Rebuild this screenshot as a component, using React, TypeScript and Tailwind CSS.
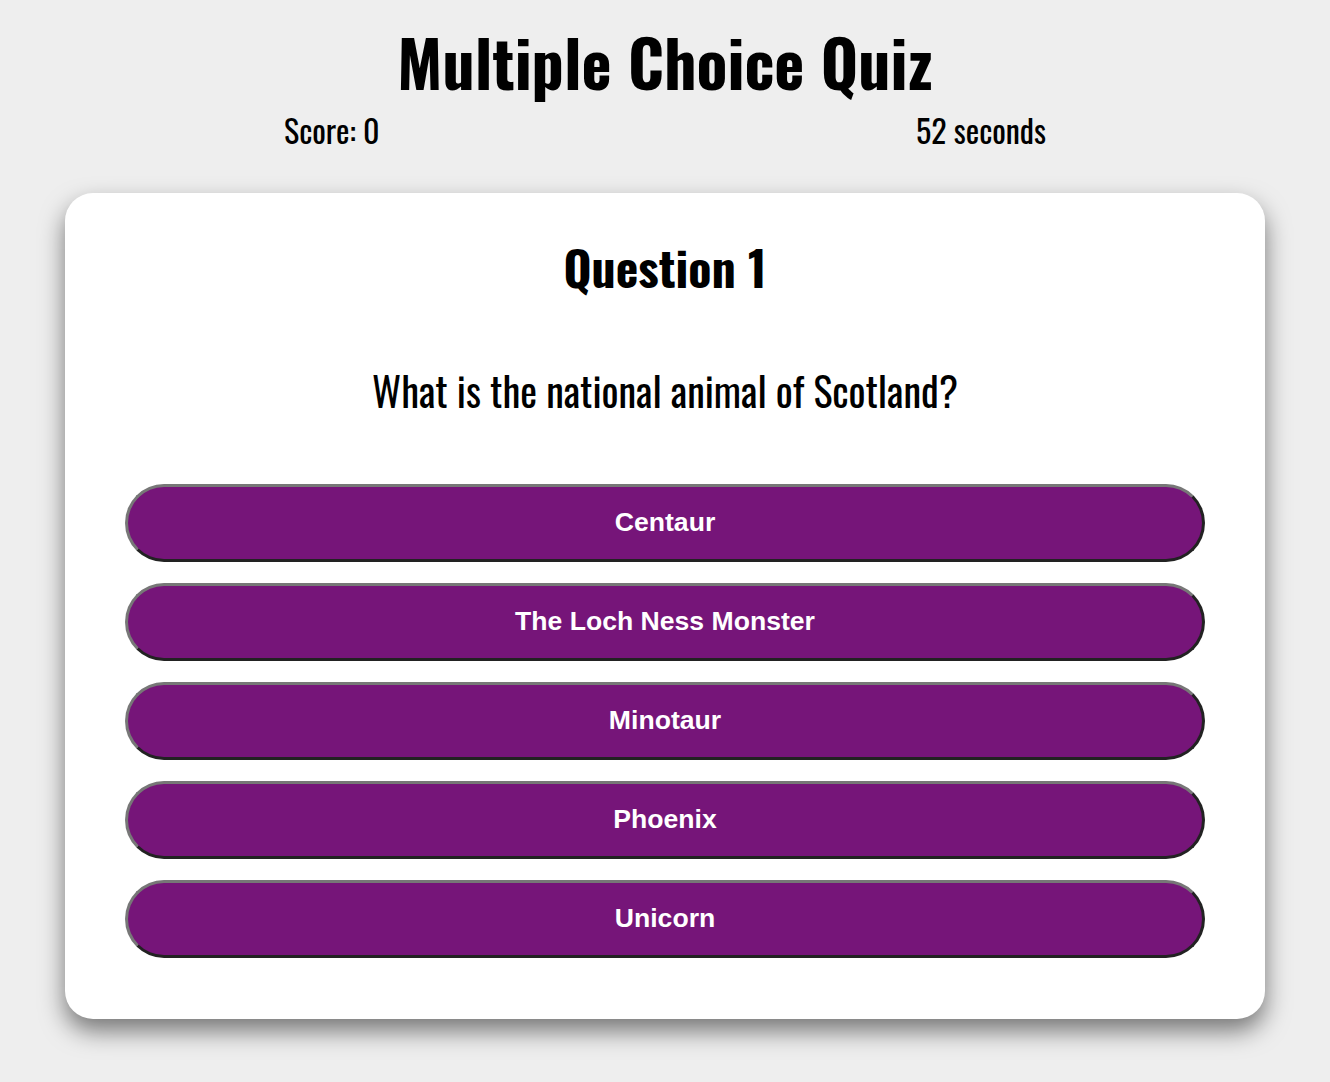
const ANSWERS = ['Centaur', 'The Loch Ness Monster', 'Minotaur', 'Phoenix', 'Unicorn']

const cond = "font-['Oswald','DejaVu_Sans_Condensed','Liberation_Sans_Narrow',sans-serif]"

export default function App() {
  return (
    <div className="min-h-[1082px] bg-[#eeeeee] flex flex-col items-center pt-[16px]">
      <h1 className={`${cond} text-[64px] font-bold leading-[90px] text-black`}>
        Multiple Choice Quiz
      </h1>
      <div className={`${cond} w-[762px] flex justify-between text-[32px] leading-[44px] text-black mt-[2px]`}>
        <span>Score: 0</span>
        <span>52 seconds</span>
      </div>

      <div className="mt-[41px] w-[1200px] bg-white rounded-[28px] shadow-[0_12px_24px_rgba(0,0,0,0.5)] px-[60px] pt-[34px] pb-[61px] flex flex-col items-center">
        <h2 className={`${cond} text-[48px] font-bold leading-[80px] text-black`}>Question 1</h2>
        <p className={`${cond} text-[40px] leading-[60px] text-black mt-[53px]`}>
          What is the national animal of Scotland?
        </p>
        <div className="mt-[64px] w-full flex flex-col gap-[21px]">
          {ANSWERS.map((a) => (
            <button
              key={a}
              className="h-[78px] w-full rounded-full bg-[#761579] border-[3px] border-t-[#777777] border-l-[#777777] border-b-[#222222] border-r-[#222222] text-white font-['Liberation_Sans',Arial,sans-serif] font-bold text-[26.6px]"
            >
              {a}
            </button>
          ))}
        </div>
      </div>
    </div>
  )
}
